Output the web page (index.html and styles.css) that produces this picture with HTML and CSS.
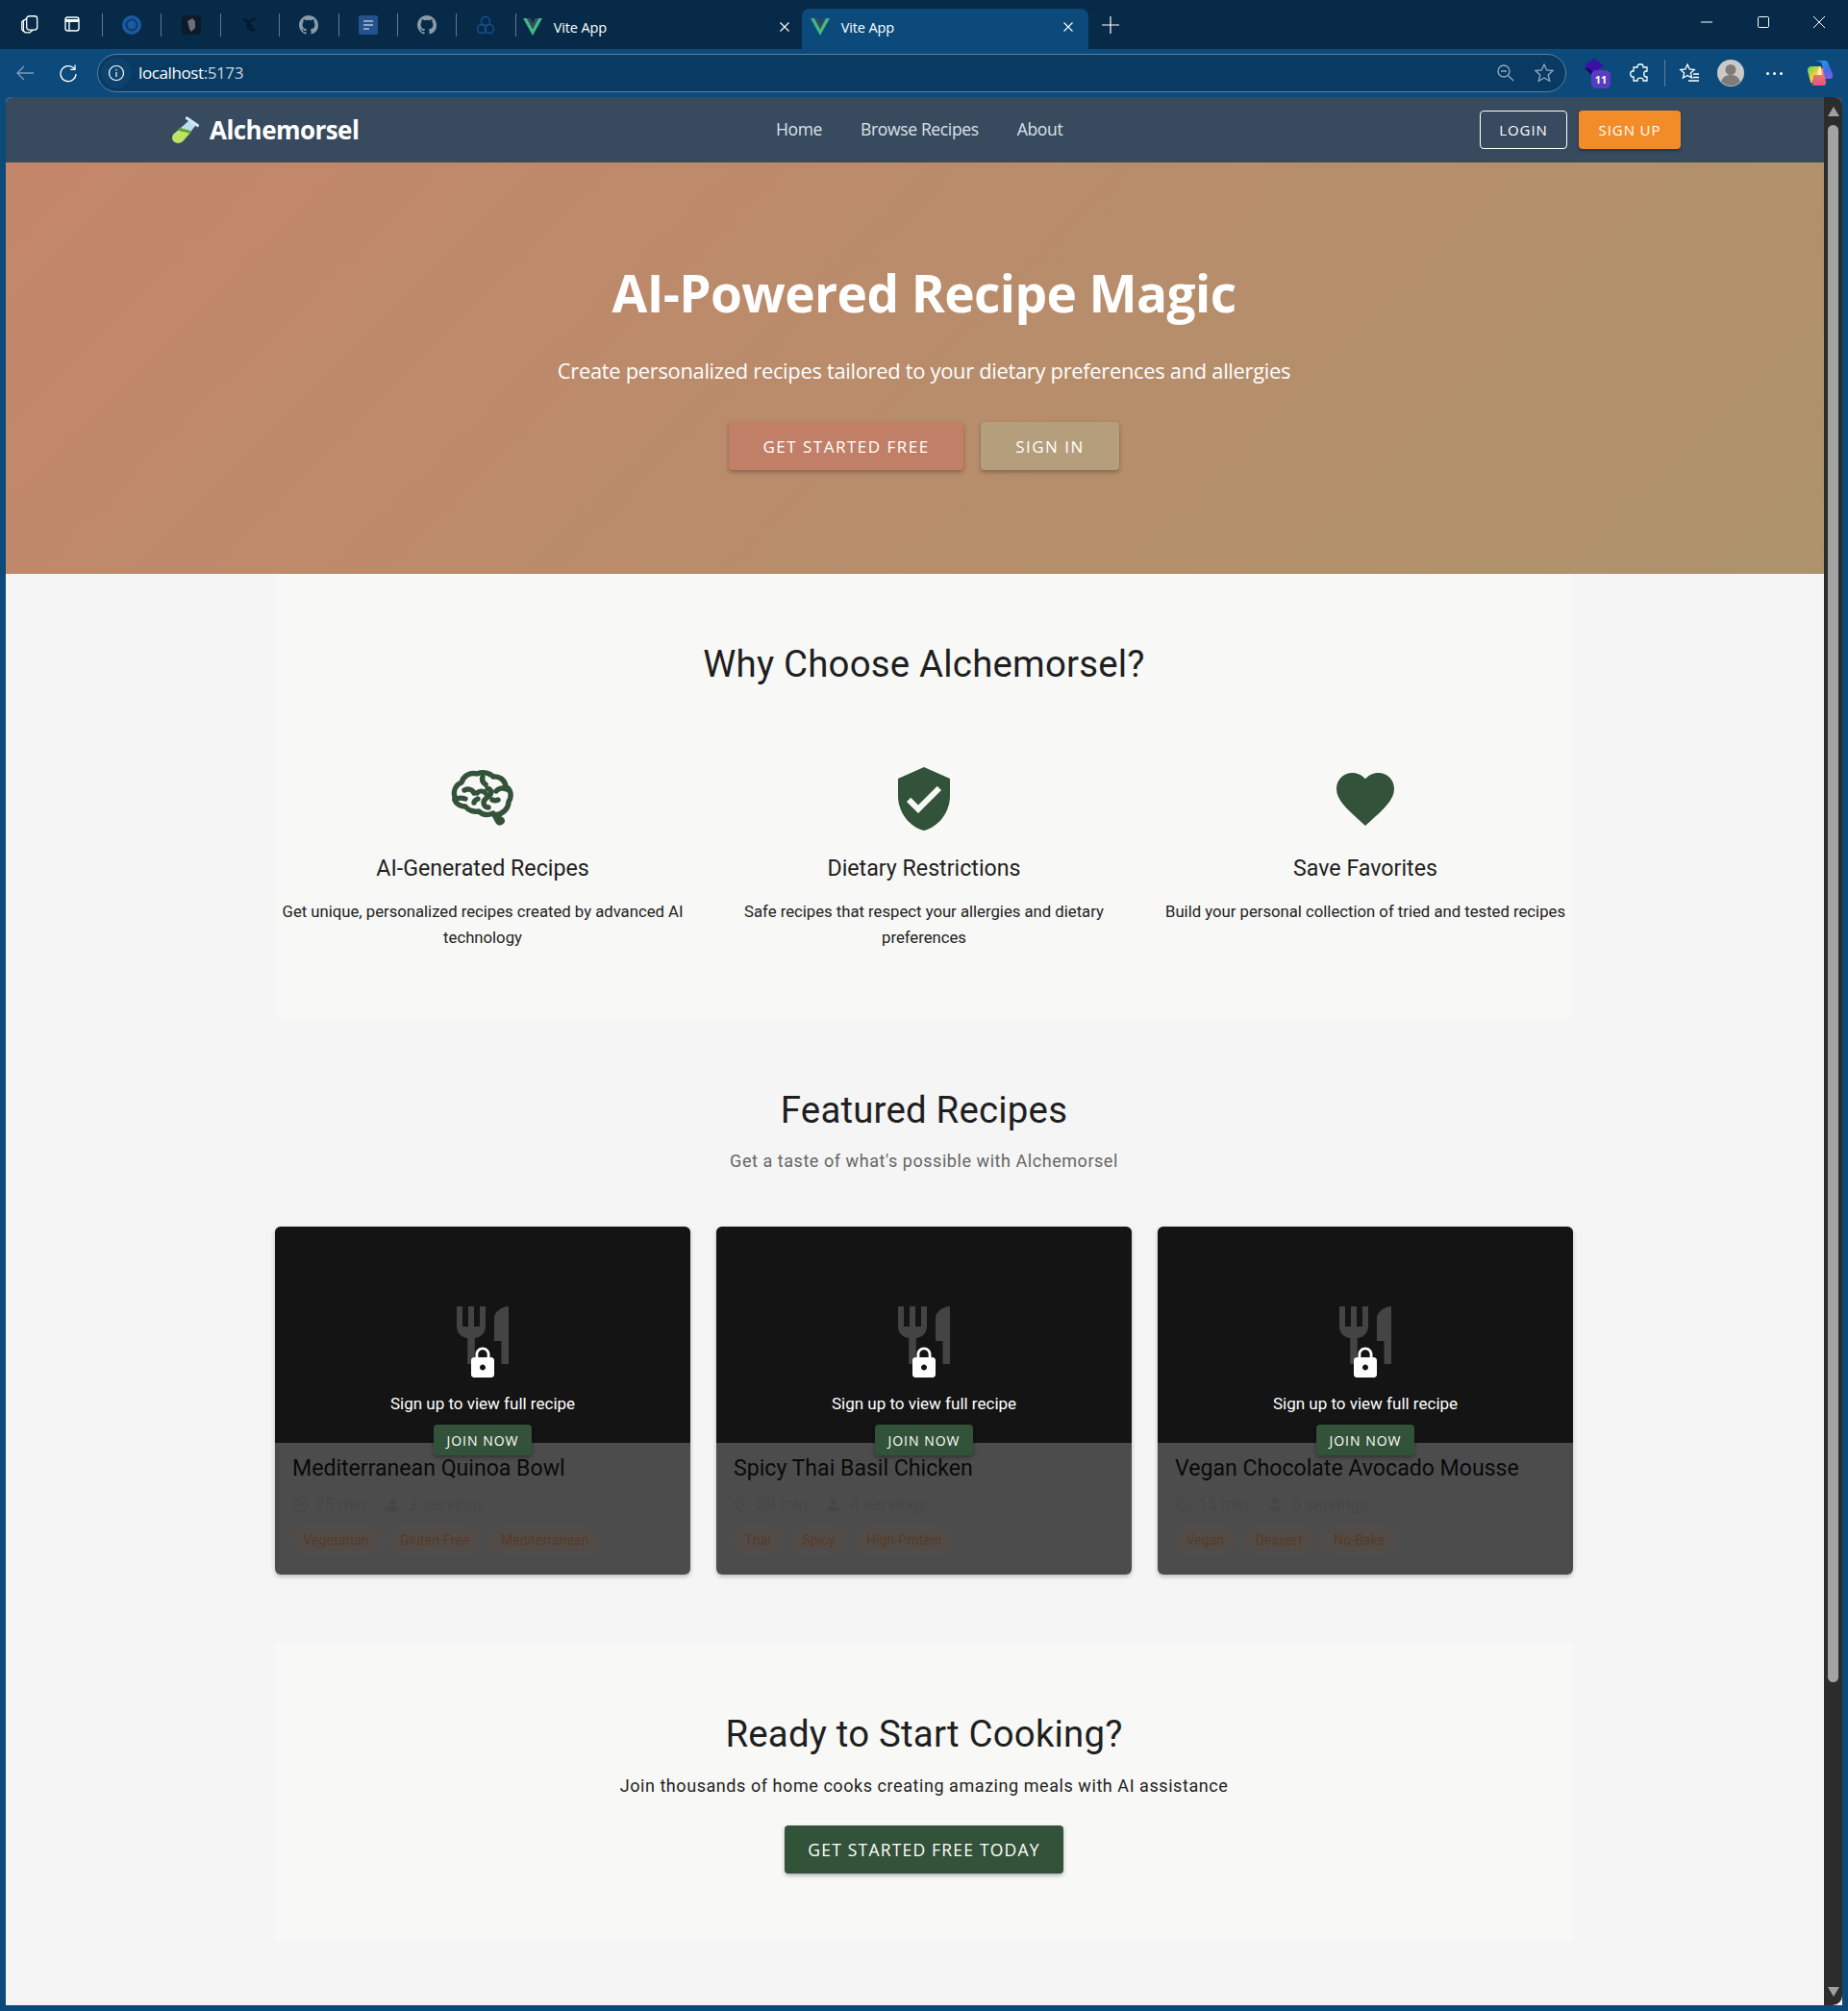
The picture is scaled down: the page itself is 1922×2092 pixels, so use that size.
FILE: index.html
```html
<!DOCTYPE html>
<html lang="en">
<head>
<meta charset="utf-8">
<title>Vite App</title>
<link rel="stylesheet" href="styles.css">
</head>
<body>
<div class="window">
  <header class="tabbar">
    <div class="tb-icon first"><svg width="22" height="22" viewBox="0 0 20 20" fill="none" stroke="#fff" stroke-width="1.2"><rect x="7" y="2.5" width="10" height="13" rx="2.5"/><path d="M7 4.5 4 7v8.5c0 1.5 1 2.5 2.5 2.5H10l3-2.5"/><path d="M4.500 6 2.500 8v6.500c0 1 .6 1.800 1.500 2.200"/></svg></div>
    <div class="tb-icon second"><svg width="20" height="20" viewBox="0 0 20 20" fill="none" stroke="#fff" stroke-width="1.4"><rect x="3" y="3" width="14" height="14" rx="2.5"/><path d="M3 6.500h14" stroke-width="3"/><path d="M7 7v10"/></svg></div>
    <i class="sep"></i>
    <div class="fav"><svg width="20" height="20" viewBox="0 0 20 20"><circle cx="10" cy="10" r="10" fill="#1c5aa0"/><circle cx="10" cy="10" r="5.500" fill="none" stroke="#0b3a70" stroke-width="2"/></svg></div>
    <i class="sep"></i>
    <div class="fav"><svg width="20" height="20" viewBox="0 0 20 20"><rect width="20" height="20" rx="4" fill="#0b1b2b"/><path d="M6 6l5-3 3 3v7l-4 4-2-3z" fill="#6c6f73"/></svg></div>
    <i class="sep"></i>
    <div class="fav"><svg width="20" height="20" viewBox="0 0 20 20" fill="none" stroke="#04192c" stroke-width="2.4"><path d="M3 5c4-2 8 7 12 11M16 4c-5 0-8 3-8 7 0 3 3 5 7 5"/></svg></div>
    <i class="sep"></i>
    <div class="fav"><svg width="20" height="20" viewBox="0 0 16 16"><path fill="#8a9aa8" d="M8 0C3.580 0 0 3.580 0 8c0 3.540 2.290 6.530 5.470 7.590.4.070.55-.17.55-.38v-1.340c-2.230.48-2.690-1.070-2.690-1.070-.36-.93-.89-1.170-.89-1.170-.73-.5.05-.49.05-.49.8.06 1.230.83 1.230.83.72 1.220 1.870.87 2.330.66.070-.52.28-.87.51-1.070-1.780-.2-3.640-.89-3.640-3.950 0-.87.31-1.590.82-2.150-.08-.2-.36-1.020.08-2.120 0 0 .67-.21 2.200.82a7.600 7.600 0 0 1 4 0c1.530-1.040 2.200-.82 2.200-.82.44 1.100.16 1.920.08 2.120.51.56.82 1.270.82 2.150 0 3.070-1.870 3.750-3.650 3.950.29.25.54.73.54 1.480v2.200c0 .21.15.46.55.38A8.010 8.010 0 0 0 16 8c0-4.420-3.580-8-8-8z"/></svg></div>
    <i class="sep"></i>
    <div class="fav"><svg width="20" height="20" viewBox="0 0 20 20"><rect width="20" height="20" rx="2" fill="#24528f"/><path d="M5 6h10M5 10h10M5 14h6" stroke="#8aa6cc" stroke-width="2"/></svg></div>
    <i class="sep"></i>
    <div class="fav"><svg width="20" height="20" viewBox="0 0 16 16"><path fill="#8a9aa8" d="M8 0C3.580 0 0 3.580 0 8c0 3.540 2.290 6.530 5.470 7.590.4.070.55-.17.55-.38v-1.340c-2.230.48-2.690-1.070-2.690-1.070-.36-.93-.89-1.170-.89-1.170-.73-.5.05-.49.05-.49.8.06 1.230.83 1.230.83.72 1.220 1.870.87 2.330.66.070-.52.28-.87.51-1.070-1.780-.2-3.640-.89-3.640-3.950 0-.87.31-1.590.82-2.150-.08-.2-.36-1.020.08-2.120 0 0 .67-.21 2.200.82a7.600 7.600 0 0 1 4 0c1.530-1.040 2.200-.82 2.200-.82.44 1.100.16 1.920.08 2.120.51.56.82 1.270.82 2.150 0 3.070-1.870 3.750-3.650 3.950.29.25.54.73.54 1.480v2.200c0 .21.15.46.55.38A8.010 8.010 0 0 0 16 8c0-4.420-3.580-8-8-8z"/></svg></div>
    <i class="sep"></i>
    <div class="fav"><svg width="20" height="20" viewBox="0 0 20 20" fill="none" stroke="#14518f" stroke-width="1.5"><circle cx="10" cy="6" r="4.500"/><circle cx="6" cy="14" r="4.500"/><circle cx="14" cy="14" r="4.500"/></svg></div>
    <i class="sep"></i>
    <div class="tab">
      <svg class="vue" width="20" height="18" viewBox="0 0 20 18"><path d="M0 0h4l6 11L16 0h4L10 18z" fill="#41b883"/><path d="M4 0h3.500L10 5l2.500-5H16l-6 11z" fill="#35495e"/></svg>
      <span class="tab-title">Vite App</span>
      <svg class="tab-x" width="10" height="10" viewBox="0 0 10 10" stroke="#fff" stroke-width="1.1"><path d="M0.5 0.5l9 9M9.5 0.5l-9 9"/></svg>
    </div>
    <div class="tab active">
      <svg class="vue" width="20" height="18" viewBox="0 0 20 18"><path d="M0 0h4l6 11L16 0h4L10 18z" fill="#41b883"/><path d="M4 0h3.500L10 5l2.500-5H16l-6 11z" fill="#35495e"/></svg>
      <span class="tab-title">Vite App</span>
      <svg class="tab-x" width="10" height="10" viewBox="0 0 10 10" stroke="#fff" stroke-width="1.1"><path d="M0.5 0.5l9 9M9.5 0.5l-9 9"/></svg>
    </div>
    <svg class="newtab" width="18" height="18" viewBox="0 0 18 18" stroke="#fff" stroke-width="1.2"><path d="M9 0v18M0 9h18"/></svg>
    <div class="winctl">
      <svg width="12" height="12" viewBox="0 0 12 12" stroke="#fff"><path d="M0 6h12"/></svg>
      <svg width="12" height="12" viewBox="0 0 12 12" fill="none" stroke="#fff"><rect x=".5" y=".5" width="11" height="11" rx="1"/></svg>
      <svg width="12" height="12" viewBox="0 0 12 12" stroke="#fff"><path d="M0 0l12 12M12 0 0 12"/></svg>
    </div>
  </header>
  <div class="toolbar">
    <svg class="back" width="20" height="18" viewBox="0 0 20 18" fill="none" stroke="#7f9fbb" stroke-width="1.3"><path d="M19 9H2M9 2 2 9l7 7"/></svg>
    <svg class="reload" width="20" height="20" viewBox="0 0 20 20" fill="none" stroke="#fff" stroke-width="1.3"><path d="M16.500 6A8 8 0 1 0 18 11"/><path d="M17 1.500V6.300h-4.800"/></svg>
    <div class="omnibox">
      <span class="info"><svg width="18" height="18" viewBox="0 0 18 18" fill="none" stroke="#fff" stroke-width="1.200"><circle cx="9" cy="9" r="7.500"/><path d="M9 8v5M9 5v1.500"/></svg></span>
      <span class="url">localhost<span class="url-dim">:5173</span></span>
      <svg class="omni-zoom" width="20" height="20" viewBox="0 0 20 20" fill="none" stroke="#93a9bd" stroke-width="1.300"><circle cx="8" cy="8" r="6"/><path d="M5 8h6M12.500 12.500 18 18"/></svg>
      <svg class="omni-star" width="22" height="22" viewBox="0 0 22 22" fill="none" stroke="#93a9bd" stroke-width="1.300"><path d="m11 2 2.700 6 6.300.6-4.800 4.300 1.500 6.400L11 16l-5.700 3.300 1.500-6.400L2 8.600 8.300 8z"/></svg>
    </div>
    <div class="ext">
      <svg width="24" height="22" viewBox="0 0 24 22"><path d="M11 0l10 7-10 7L1 7z" fill="#3b0fa8"/><path d="M1 10l3-1 7 5 2 5-2 1z" fill="#1c0a6a"/></svg>
      <span class="ext-badge">11</span>
    </div>
    <svg class="puzzle" width="22" height="22" viewBox="0 0 22 22" fill="none" stroke="#fff" stroke-width="1.300"><path d="M8 4c0-3 6-3 6 0v1h4v4h-1c-3 0-3 6 0 6h1v4h-4v-1c0-2.500-6-2.500-6 0v1H4v-4H3c-3 0-3-6 0-6h1V5h4z"/></svg>
    <i class="toolsep"></i>
    <svg class="favs" width="22" height="22" viewBox="0 0 22 22" fill="none" stroke="#fff" stroke-width="1.300"><path d="m9 2 2.200 5 5 .5-3.800 3.400 1.200 5.100L9 13.400 4.400 16l1.200-5.100L1.800 7.500l5-.5z"/><path d="M15 12h6M15 15.500h6M10 19h11"/></svg>
    <svg class="avatar" width="28" height="28" viewBox="0 0 28 28"><circle cx="14" cy="14" r="14" fill="#cbcac8"/><circle cx="14" cy="10.500" r="5.500" fill="#7d7c7a"/><path d="M4 23c2-6 6-7 10-7s8 1 10 7a14 14 0 0 1-20 0z" fill="#7d7c7a"/></svg>
    <span class="dots"><i></i><i></i><i></i></span>
    <svg class="copilot" width="28" height="28" viewBox="0 0 28 28"><defs><linearGradient id="cp1" x1="0" y1="0" x2="1" y2="1"><stop offset="0" stop-color="#1fa4e8"/><stop offset=".6" stop-color="#3f6ef0"/><stop offset="1" stop-color="#9a4fe0"/></linearGradient><linearGradient id="cp2" x1="0" y1="0" x2="1" y2="1"><stop offset="0" stop-color="#5fd05a"/><stop offset=".5" stop-color="#f5d03a"/><stop offset="1" stop-color="#f0703a"/></linearGradient><linearGradient id="cp3" x1="0" y1="0" x2="0" y2="1"><stop offset="0" stop-color="#f58a50"/><stop offset="1" stop-color="#e8508a"/></linearGradient></defs><path d="M9 1h10c2 0 3 1 3.500 3L27 15c.8 3-.8 5-3 5h-5l-3-15c-.4-2-1.500-3-3-3z" fill="url(#cp1)"/><path d="M5 7h10l2 9H8l-2 8c-1 1-2 0-2-1L1 12c-.5-3 1.500-5 4-5z" fill="url(#cp2)"/><path d="M14 9h3l3 14c.3 3-1 4-3 4H8c-1.500 0-2.500-1-2-2l2-9h8z" fill="url(#cp3)"/><path d="M14 8c1 1 2 4 2 8h-5l2-8z" fill="#fff" opacity=".75"/></svg>
  </div>

  <main class="page">
    <nav class="nav">
      <a class="logo">
        <svg width="30" height="30" viewBox="0 0 30 30"><path d="M20 5l7 5-14 17q-4 3-8 1t-2-8z" fill="#bcdcf2"/><path d="M14 13l8 4-9 10q-4 3-8 1t-2-8z" fill="#bfe25f"/><path d="M10 12.500c3 2 8 2 12 4l-2 2.500c-4-2-8-2-12-3.500z" fill="#5e9e3a"/><path d="M17.500 3 28.500 10.500" stroke="#cfe6f5" stroke-width="3.200" stroke-linecap="round"/></svg>
        <span>Alchemorsel</span>
      </a>
      <div class="links"><a>Home</a><a>Browse Recipes</a><a>About</a></div>
      <div class="auth"><button class="btn-login">LOGIN</button><button class="btn-signup">SIGN UP</button></div>
    </nav>

    <section class="hero">
      <h1>AI-Powered Recipe Magic</h1>
      <p>Create personalized recipes tailored to your dietary preferences and allergies</p>
      <div class="hero-actions"><button class="btn-terra">GET STARTED FREE</button><button class="btn-sand">SIGN IN</button></div>
    </section>

    <section class="panel why">
      <h2>Why Choose Alchemorsel?</h2>
      <div class="grid">
        <article class="feature">
          <div class="ficon"><svg class="brain" width="84" height="72" viewBox="0 5 84 72" fill="none" stroke="#33523a" stroke-width="5.400" stroke-linecap="round" stroke-linejoin="round"><path d="M55 58c8-1 14-7 14-14 4-6 2-13-3-16-1-7-7-11-13-10-5-5-12-5-17-3-7-2-14 2-16 9-6 2-9 9-7 15-1 6 5 10 11 10 3 4 9 6 14 5 4 4 10 4 15 2l5 9c2 2 5 0 4-2z"/><path d="M42 18c-1 3 0 6 3 8M23 32c4-2 8-1 10 3M13 42c4-3 8-2 11-1M67 31c-4-2-9-1-11 2M36 35c3-3 7-2 9 0M47 30c4 1 5 5 2 8-3 2-6 3-6 7 0 3 2 5 5 5M58 42c-2 1-4 1-6 0M37 41c-2 1-4 2-4 4"/></svg></div>
          <h3>AI-Generated Recipes</h3>
          <p>Get unique, personalized recipes created by advanced AI technology</p>
        </article>
        <article class="feature">
          <div class="ficon"><svg width="72" height="72" viewBox="0 0 24 24" fill="#33523a"><path d="M12 1 3 5v6c0 5.550 3.840 10.740 9 12 5.160-1.260 9-6.450 9-12V5l-9-4zm-2 16-4-4 1.410-1.410L10 14.170l6.590-6.590L18 9l-8 8z"/></svg></div>
          <h3>Dietary Restrictions</h3>
          <p>Safe recipes that respect your allergies and dietary preferences</p>
        </article>
        <article class="feature">
          <div class="ficon"><svg width="72" height="72" viewBox="0 0 24 24" fill="#33523a"><path d="M12 21.350l-1.450-1.320C5.400 15.360 2 12.280 2 8.500 2 5.420 4.420 3 7.500 3c1.740 0 3.410.81 4.500 2.090C13.090 3.810 14.760 3 16.500 3 19.580 3 22 5.420 22 8.500c0 3.780-3.400 6.860-8.550 11.540L12 21.350z"/></svg></div>
          <h3>Save Favorites</h3>
          <p>Build your personal collection of tried and tested recipes</p>
        </article>
      </div>
    </section>

    <section class="featured">
      <h2>Featured Recipes</h2>
      <p class="sub">Get a taste of what's possible with Alchemorsel</p>
      <div class="grid cards">
        <article class="card">
          <div class="thumb"><svg width="72" height="72" viewBox="0 0 24 24" fill="#e3e3e3"><path d="M11 9H9V2H7v7H5V2H3v7c0 2.120 1.660 3.840 3.750 3.970V22h2.500v-9.030C11.340 12.840 13 11.120 13 9V2h-2v7zm5-3v8h2.500v8H21V2c-2.760 0-5 2.240-5 4z"/></svg></div>
          <div class="card-body">
            <h4>Mediterranean Quinoa Bowl</h4>
            <div class="meta">
              <svg width="18" height="18" viewBox="0 0 18 18" fill="none" stroke="#ececec" stroke-width="1.500"><circle cx="9" cy="9" r="7"/><path d="M9 5v4l3 2"/></svg><span>25 min</span>
              <svg class="people" width="18" height="18" viewBox="0 0 18 18" fill="#ececec"><circle cx="7" cy="6" r="3.500"/><path d="M0 16c0-4 3-5.500 7-5.500s7 1.500 7 5.500z"/></svg><span>2 servings</span>
            </div>
            <div class="chips"><span>Vegetarian</span><span>Gluten-Free</span><span>Mediterranean</span></div>
          </div>
          <div class="lock-overlay">
            <svg width="36" height="36" viewBox="0 0 24 24" fill="#fff"><path d="M18 8h-1V6c0-2.760-2.240-5-5-5S7 3.240 7 6v2H6c-1.100 0-2 .9-2 2v10c0 1.100.9 2 2 2h12c1.100 0 2-.9 2-2V10c0-1.100-.9-2-2-2zm-6 9c-1.100 0-2-.9-2-2s.9-2 2-2 2 .9 2 2-.9 2-2 2zm3.100-9H8.900V6c0-1.710 1.390-3.100 3.100-3.100 1.710 0 3.100 1.390 3.100 3.100v2z"/></svg>
            <p>Sign up to view full recipe</p>
            <button>JOIN NOW</button>
          </div>
        </article>
        <article class="card">
          <div class="thumb"><svg width="72" height="72" viewBox="0 0 24 24" fill="#e3e3e3"><path d="M11 9H9V2H7v7H5V2H3v7c0 2.120 1.660 3.840 3.750 3.970V22h2.500v-9.030C11.340 12.840 13 11.120 13 9V2h-2v7zm5-3v8h2.500v8H21V2c-2.760 0-5 2.240-5 4z"/></svg></div>
          <div class="card-body">
            <h4>Spicy Thai Basil Chicken</h4>
            <div class="meta">
              <svg width="18" height="18" viewBox="0 0 18 18" fill="none" stroke="#ececec" stroke-width="1.500"><circle cx="9" cy="9" r="7"/><path d="M9 5v4l3 2"/></svg><span>20 min</span>
              <svg class="people" width="18" height="18" viewBox="0 0 18 18" fill="#ececec"><circle cx="7" cy="6" r="3.500"/><path d="M0 16c0-4 3-5.500 7-5.500s7 1.500 7 5.500z"/></svg><span>4 servings</span>
            </div>
            <div class="chips"><span>Thai</span><span>Spicy</span><span>High-Protein</span></div>
          </div>
          <div class="lock-overlay">
            <svg width="36" height="36" viewBox="0 0 24 24" fill="#fff"><path d="M18 8h-1V6c0-2.760-2.240-5-5-5S7 3.240 7 6v2H6c-1.100 0-2 .9-2 2v10c0 1.100.9 2 2 2h12c1.100 0 2-.9 2-2V10c0-1.100-.9-2-2-2zm-6 9c-1.100 0-2-.9-2-2s.9-2 2-2 2 .9 2 2-.9 2-2 2zm3.100-9H8.900V6c0-1.710 1.390-3.100 3.100-3.100 1.710 0 3.100 1.390 3.100 3.100v2z"/></svg>
            <p>Sign up to view full recipe</p>
            <button>JOIN NOW</button>
          </div>
        </article>
        <article class="card">
          <div class="thumb"><svg width="72" height="72" viewBox="0 0 24 24" fill="#e3e3e3"><path d="M11 9H9V2H7v7H5V2H3v7c0 2.120 1.660 3.840 3.750 3.970V22h2.500v-9.030C11.340 12.840 13 11.120 13 9V2h-2v7zm5-3v8h2.500v8H21V2c-2.760 0-5 2.240-5 4z"/></svg></div>
          <div class="card-body">
            <h4>Vegan Chocolate Avocado Mousse</h4>
            <div class="meta">
              <svg width="18" height="18" viewBox="0 0 18 18" fill="none" stroke="#ececec" stroke-width="1.500"><circle cx="9" cy="9" r="7"/><path d="M9 5v4l3 2"/></svg><span>15 min</span>
              <svg class="people" width="18" height="18" viewBox="0 0 18 18" fill="#ececec"><circle cx="7" cy="6" r="3.500"/><path d="M0 16c0-4 3-5.500 7-5.500s7 1.500 7 5.500z"/></svg><span>6 servings</span>
            </div>
            <div class="chips"><span>Vegan</span><span>Dessert</span><span>No-Bake</span></div>
          </div>
          <div class="lock-overlay">
            <svg width="36" height="36" viewBox="0 0 24 24" fill="#fff"><path d="M18 8h-1V6c0-2.760-2.240-5-5-5S7 3.240 7 6v2H6c-1.100 0-2 .9-2 2v10c0 1.100.9 2 2 2h12c1.100 0 2-.9 2-2V10c0-1.100-.9-2-2-2zm-6 9c-1.100 0-2-.9-2-2s.9-2 2-2 2 .9 2 2-.9 2-2 2zm3.100-9H8.900V6c0-1.710 1.390-3.100 3.100-3.100 1.710 0 3.100 1.390 3.100 3.100v2z"/></svg>
            <p>Sign up to view full recipe</p>
            <button>JOIN NOW</button>
          </div>
        </article>
      </div>
    </section>

    <section class="panel cta">
      <h2>Ready to Start Cooking?</h2>
      <p>Join thousands of home cooks creating amazing meals with AI assistance</p>
      <button>GET STARTED FREE TODAY</button>
    </section>

    <aside class="scrollbar">
      <i class="arrow-up"></i>
      <i class="thumbbar"></i>
      <i class="arrow-down"></i>
    </aside>
  </main>
</div>
</body>
</html>
```
FILE: styles.css
```css
* { box-sizing: border-box; }
html, body { margin: 0; padding: 0; height: 2092px; overflow: hidden; background: #0a4a7a; }
body { font-family: Roboto, "Liberation Sans", sans-serif; color: #222; }
button { font: inherit; border: 0; cursor: pointer; }
h1, h2, h3, h4, p { margin: 0; font-weight: 400; }

.window { width: 1922px; height: 2092px; display: flex; flex-direction: column; background: #0b4a7b; }

/* browser chrome */
.tabbar { height: 51px; flex: none; background: #062a47; display: flex; align-items: center; padding: 0 0 0 20px; position: relative; font-family: "Open Sans", sans-serif; }
.tb-icon { width: 22px; height: 22px; margin-top: -1px; }
.tb-icon.second { width: 20px; height: 20px; margin-left: 23px; margin-right: 21px; }
.sep { width: 1px; height: 24px; background: #5f7a92; flex: none; }
.fav { width: 20px; height: 20px; margin: 0 20.200px; flex: none; }
.tab { width: 300px; height: 42px; margin-top: 9px; display: flex; align-items: center; padding: 0 16px 0 7px; color: #fff; flex: none; }
.tab.active { background: #0b4a7b; border-radius: 8px 8px 0 0; padding-left: 9px; margin-left: -3px; width: 298px; }
.vue { flex: none; }
.tab-title { margin-left: 12px; font-size: 14.500px; flex: 1; letter-spacing: -.1px; margin-top: -4px; }
.tab .vue, .tab .tab-x { margin-top: -4px; }
.newtab { margin-left: 14px; flex: none; }
.winctl { margin-left: auto; display: flex; gap: 46.500px; padding-right: 24px; margin-top: -5px; }

.toolbar { height: 50px; flex: none; display: flex; align-items: center; position: relative; background: #0b4a7b; }
.back { margin-left: 16px; flex: none; }
.reload { margin-left: 25px; flex: none; }
.omnibox { margin-left: 20px; width: 1528px; height: 40px; border-radius: 20px; background: #083a62; border: 1px solid #5f7f9c; display: flex; align-items: center; flex: none; color: #fff; }
.info { width: 32px; height: 32px; margin-left: 3px; border-radius: 50%; background: #0c426c; display: flex; align-items: center; justify-content: center; flex: none; }
.url { margin-left: 7px; font-size: 17px; font-family: "Open Sans", sans-serif; letter-spacing: -.4px; margin-top: -1px; }
.url-dim { color: #c7d4df; }
.omni-zoom { margin-left: auto; margin-right: 19px; flex: none; }
.omni-star { margin-right: 11px; flex: none; }
.ext { position: relative; width: 28px; height: 30px; margin-left: 18px; flex: none; }
.ext-badge { position: absolute; left: 8px; top: 12px; width: 20px; height: 19px; border-radius: 5px; background: #5b3bc4; color: #fff; font: 700 11px/19px "Open Sans", sans-serif; text-align: center; }
.puzzle { margin-left: 20px; flex: none; }
.toolsep { width: 1px; height: 28px; background: #5f7f9c; margin-left: 14px; flex: none; }
.favs { margin-left: 14px; flex: none; }
.avatar { margin-left: 18px; flex: none; }
.dots { margin-left: 23px; display: flex; gap: 4px; flex: none; }
.dots i { width: 3px; height: 3px; border-radius: 50%; background: #fff; }
.copilot { margin-left: 25px; flex: none; }

/* page */
.page { position: relative; margin-left: 6px; width: 1910px; height: 1985px; background: #f5f5f5; overflow: hidden; border-top-left-radius: 6px; }
.nav { height: 68px; background: #374a5e; display: flex; align-items: center; justify-content: space-between; padding: 0 168px 0 171px; color: #fff; font-family: "Open Sans", sans-serif; }
.logo { display: flex; align-items: center; gap: 11px; font-weight: 700; font-size: 26px; letter-spacing: -.55px; }
.logo svg { flex: none; }
.links { display: flex; gap: 40px; font-size: 17.500px; color: #dde2e7; letter-spacing: -.35px; margin-top: -2px; }
.auth { display: flex; gap: 12px; }
.auth button { height: 40px; border-radius: 4px; font-size: 15px; letter-spacing: .9px; color: #fff; font-family: "Open Sans", sans-serif; }
.btn-login { width: 91px; background: transparent; border: 1px solid #fff; }
.btn-signup { width: 106px; background: #f28c28; box-shadow: 0 2px 3px rgba(0,0,0,.3); }

.hero { height: 428px; background: linear-gradient(135deg, #c4866a 0%, #ad936c 100%); color: #fff; text-align: center; padding-top: 98px; font-family: "Open Sans", sans-serif; }
.hero h1 { font-size: 53.200px; font-weight: 700; line-height: 76px; letter-spacing: -.6px; }
.hero p { font-size: 21.900px; line-height: 32px; margin-top: 27px; letter-spacing: -.3px; }
.hero-actions { display: flex; justify-content: center; gap: 18px; margin-top: 37px; }
.hero-actions button { height: 50px; border-radius: 4px; color: #fff; font-size: 17px; letter-spacing: 1.500px; box-shadow: 0 2px 4px rgba(0,0,0,.3); font-family: "Open Sans", sans-serif; }
.btn-terra { width: 244px; background: #c17f67; }
.btn-sand { width: 144px; background: #b59e7c; }

.panel { width: 1350px; margin: 0 auto; background: #f8f8f6; text-align: center; border-radius: 4px; }
.grid { display: grid; grid-template-columns: repeat(3, 432px); gap: 27px; }
.why { height: 463px; padding-top: 67px; }
h2 { font-size: 38.400px; line-height: 54px; color: #1f1f1f; letter-spacing: .2px; }
.why .grid { margin-top: 77px; }
.feature { text-align: center; }
.ficon { height: 72px; display: flex; justify-content: center; align-items: center; }
.feature h3 { font-size: 23.200px; line-height: 32px; margin-top: 20px; color: #1f1f1f; }
.feature p { font-size: 16.700px; line-height: 27px; margin-top: 16px; color: #222; }

.featured { width: 1350px; margin: 0 auto; text-align: center; padding-top: 68px; }
.sub { font-size: 18px; line-height: 27px; color: #666; margin-top: 12px; letter-spacing: .55px; }
.cards { margin-top: 55px; text-align: left; }
.card { position: relative; height: 362px; border-radius: 6px; overflow: hidden; background: #fff; box-shadow: 0 2px 4px rgba(0,0,0,.25); }
.thumb { height: 225px; background: #444; display: flex; align-items: center; justify-content: center; }
.card-body { padding: 11px 18px 0; }
.card-body h4 { font-size: 23.100px; line-height: 32px; color: #1f1f1f; white-space: nowrap; }
.meta { display: flex; align-items: center; gap: 6px; margin-top: 9px; font-size: 17.500px; color: #ececec; line-height: 24px; height: 24px; }
.people { margin-left: 14px; }
.chips { position: relative; z-index: 2; display: flex; gap: 9.500px; margin-top: 11px; }
.chips span { height: 29px; border-radius: 15px; padding: 0 11.500px; font-size: 14px; letter-spacing: .1px; line-height: 29px; background: #524c48; color: #573a26; }
.lock-overlay { position: absolute; inset: 0; z-index: 1; background: rgba(0,0,0,.7); display: flex; flex-direction: column; align-items: center; justify-content: center; color: #fff; }
.lock-overlay p { font-size: 17px; line-height: 24px; margin-top: 12px; }
.lock-overlay button { width: 102px; height: 32px; margin-top: 10px; background: #33523a; color: #fff; border-radius: 4px; font-size: 14px; letter-spacing: 1px; font-family: "Open Sans", sans-serif; box-shadow: 0 2px 4px rgba(0,0,0,.35); }

.cta { height: 309px; margin-top: 72px; padding-top: 67px; }
.cta p { font-size: 18px; line-height: 27px; margin-top: 13px; color: #222; letter-spacing: .56px; }
.cta button { width: 290px; height: 50px; margin-top: 28px; background: #33523a; color: #fff; border-radius: 4px; font-size: 17.500px; letter-spacing: 1.200px; font-family: "Open Sans", sans-serif; box-shadow: 0 2px 4px rgba(0,0,0,.3); }

.scrollbar { position: absolute; top: 0; right: 0; bottom: 0; z-index: 3; width: 19px; background: #2c2c2c; border-top-right-radius: 10px; border-bottom-right-radius: 10px; display: flex; flex-direction: column; align-items: center; padding-top: 10px; }
.arrow-up { width: 0; height: 0; border: 6px solid transparent; border-top: 0; border-bottom: 10px solid #a0a0a0; flex: none; }
.thumbbar { width: 11px; height: 1620px; margin-top: 9px; border-radius: 6px; background: #a3a3a3; flex: none; }
.arrow-down { width: 0; height: 0; margin-top: 317px; border: 6px solid transparent; border-bottom: 0; border-top: 10px solid #a0a0a0; flex: none; }
```
